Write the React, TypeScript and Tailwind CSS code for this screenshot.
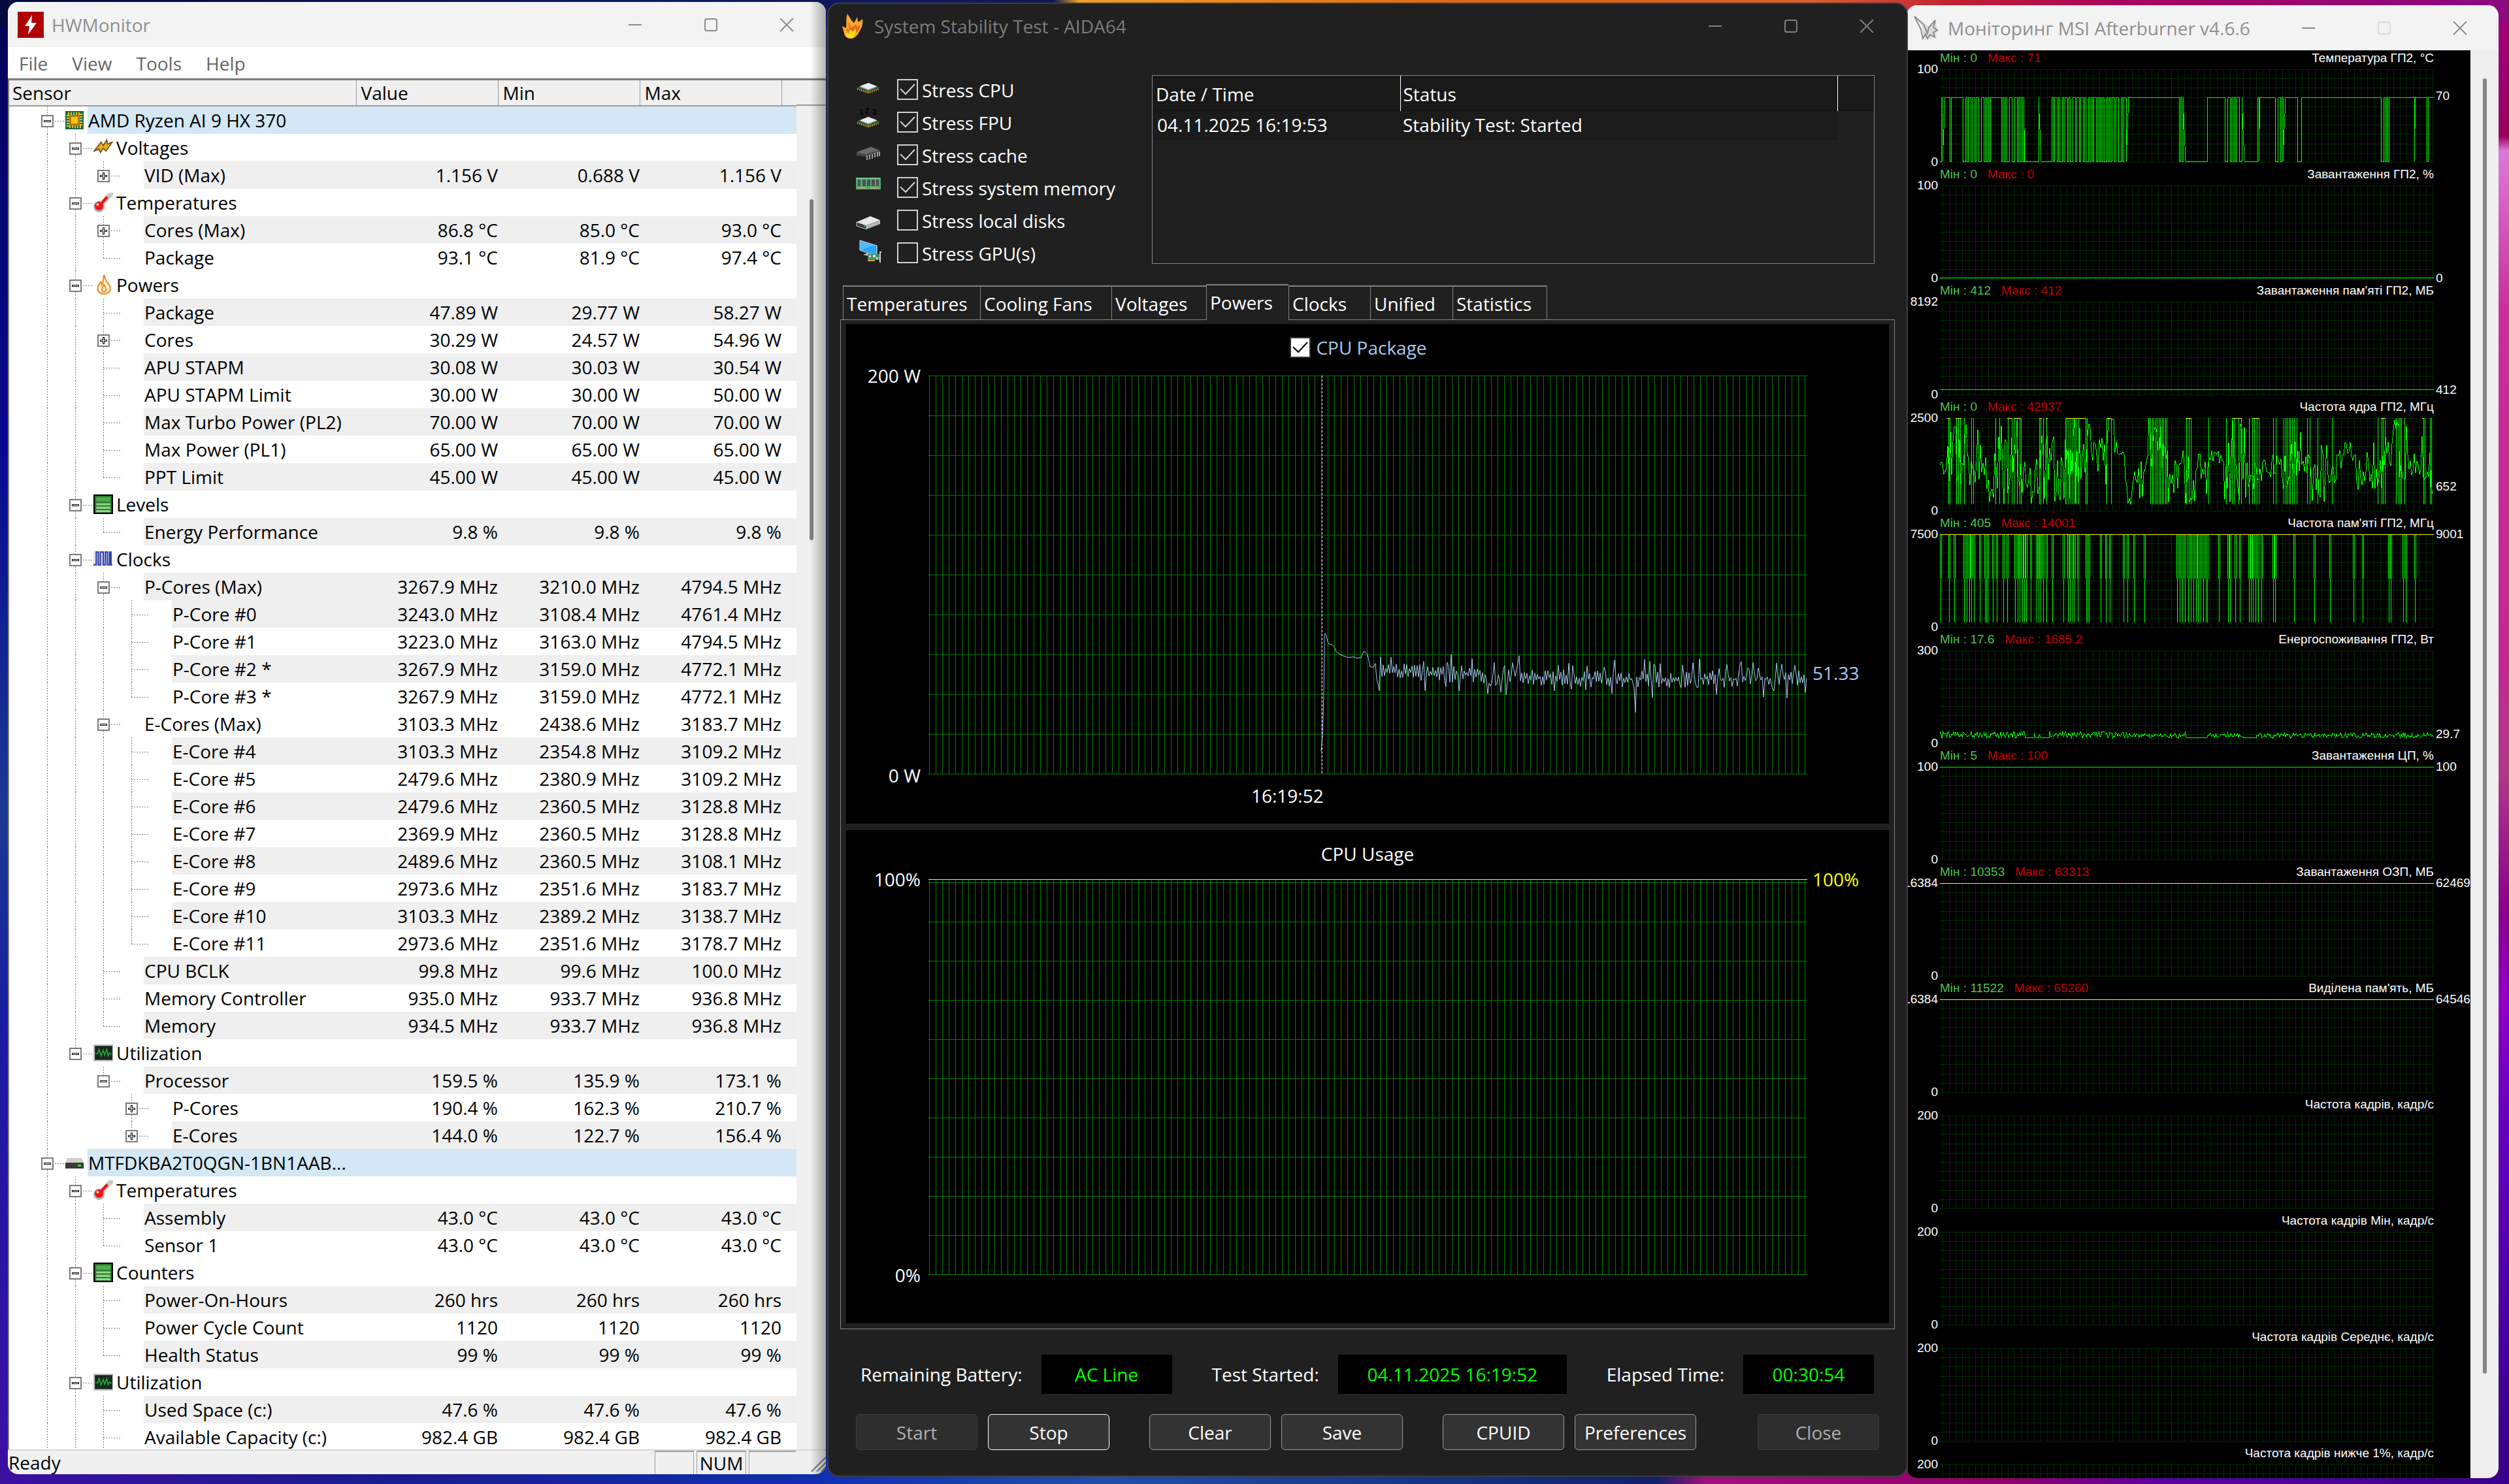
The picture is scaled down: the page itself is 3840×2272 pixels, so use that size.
import React from "react";

type Icon = "chip" | "bolt" | "thermometer" | "flame" | "levels" | "wave" | "graph" | "drive";

type Row = {
  level: number;
  name: string;
  mark?: "+" | "-";
  icon?: Icon;
  shaded?: boolean;
  values?: string[];
};

const group = (level: number, name: string, icon: Icon): Row => ({ level, name, icon, mark: "-" });

const row = (level: number, name: string, values: string, shaded = false, mark?: "+" | "-"): Row => ({
  level,
  name,
  mark,
  shaded,
  values: values.split("|"),
});

const rows: Row[] = [
  group(0, "AMD Ryzen AI 9 HX 370", "chip"),
  group(1, "Voltages", "bolt"),
  row(2, "VID (Max)", "1.156 V|0.688 V|1.156 V", true, "+"),
  group(1, "Temperatures", "thermometer"),
  row(2, "Cores (Max)", "86.8 °C|85.0 °C|93.0 °C", true, "+"),
  row(2, "Package", "93.1 °C|81.9 °C|97.4 °C"),
  group(1, "Powers", "flame"),
  row(2, "Package", "47.89 W|29.77 W|58.27 W", true),
  row(2, "Cores", "30.29 W|24.57 W|54.96 W", false, "+"),
  row(2, "APU STAPM", "30.08 W|30.03 W|30.54 W", true),
  row(2, "APU STAPM Limit", "30.00 W|30.00 W|50.00 W"),
  row(2, "Max Turbo Power (PL2)", "70.00 W|70.00 W|70.00 W", true),
  row(2, "Max Power (PL1)", "65.00 W|65.00 W|65.00 W"),
  row(2, "PPT Limit", "45.00 W|45.00 W|45.00 W", true),
  group(1, "Levels", "levels"),
  row(2, "Energy Performance", "9.8 %|9.8 %|9.8 %", true),
  group(1, "Clocks", "wave"),
  row(2, "P-Cores (Max)", "3267.9 MHz|3210.0 MHz|4794.5 MHz", true, "-"),
  row(3, "P-Core #0", "3243.0 MHz|3108.4 MHz|4761.4 MHz", true),
  row(3, "P-Core #1", "3223.0 MHz|3163.0 MHz|4794.5 MHz"),
  row(3, "P-Core #2 *", "3267.9 MHz|3159.0 MHz|4772.1 MHz", true),
  row(3, "P-Core #3 *", "3267.9 MHz|3159.0 MHz|4772.1 MHz"),
  row(2, "E-Cores (Max)", "3103.3 MHz|2438.6 MHz|3183.7 MHz", false, "-"),
  row(3, "E-Core #4", "3103.3 MHz|2354.8 MHz|3109.2 MHz", true),
  row(3, "E-Core #5", "2479.6 MHz|2380.9 MHz|3109.2 MHz"),
  row(3, "E-Core #6", "2479.6 MHz|2360.5 MHz|3128.8 MHz", true),
  row(3, "E-Core #7", "2369.9 MHz|2360.5 MHz|3128.8 MHz"),
  row(3, "E-Core #8", "2489.6 MHz|2360.5 MHz|3108.1 MHz", true),
  row(3, "E-Core #9", "2973.6 MHz|2351.6 MHz|3183.7 MHz"),
  row(3, "E-Core #10", "3103.3 MHz|2389.2 MHz|3138.7 MHz", true),
  row(3, "E-Core #11", "2973.6 MHz|2351.6 MHz|3178.7 MHz"),
  row(2, "CPU BCLK", "99.8 MHz|99.6 MHz|100.0 MHz", true),
  row(2, "Memory Controller", "935.0 MHz|933.7 MHz|936.8 MHz"),
  row(2, "Memory", "934.5 MHz|933.7 MHz|936.8 MHz", true),
  group(1, "Utilization", "graph"),
  row(2, "Processor", "159.5 %|135.9 %|173.1 %", true, "-"),
  row(3, "P-Cores", "190.4 %|162.3 %|210.7 %", false, "+"),
  row(3, "E-Cores", "144.0 %|122.7 %|156.4 %", true, "+"),
  group(0, "MTFDKBA2T0QGN-1BN1AAB...", "drive"),
  group(1, "Temperatures", "thermometer"),
  row(2, "Assembly", "43.0 °C|43.0 °C|43.0 °C", true),
  row(2, "Sensor 1", "43.0 °C|43.0 °C|43.0 °C"),
  group(1, "Counters", "levels"),
  row(2, "Power-On-Hours", "260 hrs|260 hrs|260 hrs", true),
  row(2, "Power Cycle Count", "1120|1120|1120"),
  row(2, "Health Status", "99 %|99 %|99 %", true),
  group(1, "Utilization", "graph"),
  row(2, "Used Space (c:)", "47.6 %|47.6 %|47.6 %", true),
  row(2, "Available Capacity (c:)", "982.4 GB|982.4 GB|982.4 GB"),
];

// small seeded generator so the charts look the same on every render
const seeded = (seed: number) => () => {
  seed = (seed * 1664525 + 1013904223) % 4294967296;
  return seed / 4294967296;
};

const range = (n: number) => Array.from({ length: n }, (_, i) => i);

const toPath = (points: number[][]) => "M" + points.map(([x, y]) => `${x.toFixed(1)} ${y.toFixed(1)}`).join("L");

/* ---------- window buttons ---------- */

const WindowButtons = ({ stroke, maxStroke = stroke }: { stroke: string; maxStroke?: string }) => (
  <div className="ml-auto flex items-center gap-[92px]">
    <button aria-label="Minimize" className="size-6">
      <svg viewBox="0 0 24 24" fill="none" stroke={stroke} strokeWidth="2">
        <path d="M2 12h20" />
      </svg>
    </button>
    <button aria-label="Maximize" className="size-6">
      <svg viewBox="0 0 24 24" fill="none" stroke={maxStroke} strokeWidth="2">
        <rect x="3" y="3" width="18" height="18" rx="3" />
      </svg>
    </button>
    <button aria-label="Close" className="size-6">
      <svg viewBox="0 0 24 24" fill="none" stroke={stroke} strokeWidth="2">
        <path d="M2 2l20 20M22 2L2 22" />
      </svg>
    </button>
  </div>
);

/* ---------- HWMonitor ---------- */

const TreeIcon = ({ icon }: { icon: Icon }) => (
  <svg viewBox="0 0 28 28" className={icon === "chip" || icon === "drive" ? "size-7" : "size-[30px]"}>
    {icon === "chip" && (
      <>
        <rect width="28" height="28" fill="#1d6b3c" />
        <rect x="4" y="4" width="20" height="20" fill="none" stroke="#f0c020" strokeWidth="4" strokeDasharray="2 2" />
        <rect x="6" y="6" width="16" height="16" fill="#b87a10" />
        <rect x="9" y="9" width="10" height="10" fill="#fbc510" />
      </>
    )}
    {icon === "bolt" && (
      <path d="M1 19L11 6l3 5 5-8 1 6 7-3-9 13-4-4-4 6-2-5z" fill="#e9ae22" stroke="#6b4d0c" strokeWidth="1.5" />
    )}
    {icon === "thermometer" && (
      <>
        <path d="M8 20L25 2" stroke="#c9c9c9" strokeWidth="7" strokeLinecap="round" />
        <circle cx="8" cy="20" r="8" fill="#b4b4b4" />
        <path d="M8 19L20 6" stroke="#f01414" strokeWidth="4" />
        <circle cx="8" cy="19" r="6" fill="#f01414" />
        <circle cx="6" cy="17" r="2" fill="#ffb0b0" />
      </>
    )}
    {icon === "flame" && (
      <>
        <path
          d="M15 0c3 5 1 7 5 11 3 3 4 5 4 9 0 4-4 7-9 7s-9-3-9-8c0-4 3-6 4-9 2 1 2 2 2 4 3-4 2-9 3-14z"
          fill="#fff3dc"
          stroke="#f28a1c"
          strokeWidth="2"
        />
        <path d="M15 14c2 3 3 4 3 7a3 3 0 0 1-6 0c0-3 2-4 3-7z" fill="#fff" stroke="#f28a1c" strokeWidth="2" />
      </>
    )}
    {icon === "levels" && (
      <>
        <rect width="28" height="28" fill="#000" />
        <rect x="2" y="2" width="24" height="24" fill="#2f7d2f" />
        <path d="M4 7h20" stroke="#4caf4c" strokeWidth="6" />
        <path d="M4 14h20M4 19h20M4 24h20" stroke="#8fd68f" strokeWidth="3" />
      </>
    )}
    {icon === "wave" && (
      <>
        <rect y="2" width="27" height="22" fill="#e4e4ea" />
        <path d="M0 22h4V4h3v18h3V4h4v18h3V4h3v18h3V4h2v18h2" fill="none" stroke="#2e40a4" strokeWidth="2" />
      </>
    )}
    {icon === "graph" && (
      <>
        <rect y="2" width="28" height="24" fill="#c0c0c0" />
        <rect x="2" y="4" width="25" height="20" fill="#1c2620" />
        <path d="M3 15h3l2-6 3 9 3-8 2 7 3-8 2 9 2-4 3 2" fill="none" stroke="#1fae38" strokeWidth="1.5" />
      </>
    )}
    {icon === "drive" && (
      <>
        <path d="M3 7h22l3 7H0z" fill="#d0d0d0" />
        <rect y="14" width="28" height="9" fill="#3a3a3a" />
        <rect x="19" y="17" width="5" height="3" fill="#2be03a" />
      </>
    )}
  </svg>
);

// does the branch at `level` go on below row `index`?
const branchGoesOn = (index: number, level: number) => {
  for (let i = index + 1; i < rows.length; i++) {
    if (rows[i].level === level) return true;
    if (rows[i].level < level) return false;
  }
  return true;
};

const TreeGuide = ({ index }: { index: number }) => {
  const { level, mark } = rows[index];
  const width = 86 + 43 * level;
  const cx = 58 + 43 * level;
  return (
    <svg width={width} height="42" className="shrink-0" shapeRendering="crispEdges" fill="none">
      <g stroke="#808080" strokeDasharray="2 2">
        {range(level).map((l) => branchGoesOn(index, l) && <path key={l} d={`M${58.5 + 43 * l} 0v42`} />)}
        <path d={`M${cx + 0.5} 0v${branchGoesOn(index, level) ? 42 : 22}`} />
        <path d={`M${cx} 22.5h${width - cx - 1}`} />
      </g>
      {mark && (
        <>
          <rect x={cx - 8} y="14" width="17" height="17" fill="#fff" stroke="#7a7a7a" strokeWidth="2" />
          <path d={`M${cx - 5} 22.5h11`} stroke="#000" strokeWidth="3" />
          {mark === "+" && <path d={`M${cx + 0.5} 17v11`} stroke="#000" strokeWidth="3" />}
          <path d={`M${cx - 4} 22.5h9`} stroke="#fff" />
          {mark === "+" && <path d={`M${cx + 0.5} 18v9`} stroke="#fff" />}
        </>
      )}
    </svg>
  );
};

const HWMonitor = () => (
  <section className="relative mt-[3px] mb-[15px] flex min-w-0 flex-[1252] flex-col overflow-hidden rounded-2xl bg-[#f0f0f0] text-black">
    <header className="flex h-[69px] shrink-0 items-center gap-3 bg-[#f3f3f3] pr-12 pl-[15px]">
      <svg viewBox="0 0 40 40" className="size-10">
        <rect width="40" height="40" fill="#b00000" />
        <path d="M22 5L11 22h7l-2 13 13-18h-8z" fill="#fff" />
      </svg>
      <h1 className="text-[28px] leading-10 text-[#8f8f8f]">HWMonitor</h1>
      <WindowButtons stroke="#8a8a8a" />
    </header>

    <nav className="flex h-12 shrink-0 items-center gap-[37px] border-b-2 border-[#f0f0f0] bg-white pt-1 pl-[17px] text-[28px] text-[#666]">
      <button>File</button>
      <button>View</button>
      <button>Tools</button>
      <button>Help</button>
    </nav>

    <div className="flex min-h-0 flex-1 overflow-hidden border-t-[3px] border-l-2 border-[#7d7d7d] bg-white">
      <table className="h-fit w-full table-fixed border-collapse text-[28px] leading-[42px] whitespace-nowrap">
        <colgroup>
          <col />
          <col className="w-[217px]" />
          <col className="w-[217px]" />
          <col className="w-[217px]" />
          <col className="w-[23px]" />
        </colgroup>
        <thead>
          <tr className="h-[39px] bg-[#f0f0f0] text-left leading-[37px] [&>th]:border-r [&>th]:border-b-2 [&>th]:border-[#9a9a9a] [&>th]:pl-[7px] [&>th]:font-normal">
            <th className="pl-[5px]!">Sensor</th>
            <th>Value</th>
            <th>Min</th>
            <th>Max</th>
            <th className="border-r-0!"></th>
          </tr>
        </thead>
        <tbody>
          {rows.map((r, i) => {
            const fill = r.level === 0 ? "bg-[#d3e7f5]" : r.shaded ? "bg-[#efefef]" : "";
            return (
              <tr key={i} className="h-[42px]">
                <td className="p-0">
                  <div className="flex h-[42px]">
                    <TreeGuide index={i} />
                    <span className="flex w-[34px] shrink-0 items-center">{r.icon && <TreeIcon icon={r.icon} />}</span>
                    <span className={`flex-1 pl-px ${fill}`}>{r.name}</span>
                  </div>
                </td>
                {range(3).map((n) => (
                  <td key={n} className={`p-0 text-right ${fill}`}>
                    {r.values?.[n]}
                  </td>
                ))}
                <td className={fill}></td>
              </tr>
            );
          })}
        </tbody>
      </table>
      <div className="flex w-[45px] shrink-0 flex-col bg-[#f0f0f0]">
        <div className="h-[39px] border-b-2 border-[#9a9a9a]" />
        <div className="mt-[143px] ml-[20px] h-[522px] w-[6px] rounded-full bg-[#808080]" />
      </div>
    </div>

    <footer className="flex shrink-0 border-t-2 border-[#d8d8d8] pr-[46px] pl-px text-[28px] leading-9">
      <span className="mr-auto">Ready</span>
      <span className="mr-1 w-[60px] border-t-2 border-r border-l border-[#a0a0a0]" />
      <span className="mr-1 w-[76px] border-t-2 border-r border-l border-[#a0a0a0] text-center leading-[34px]">NUM</span>
      <span className="w-[72px] border-t-2 border-l border-[#a0a0a0]" />
    </footer>
    <svg viewBox="0 0 24 24" className="absolute right-0 bottom-1 size-6" stroke="#7a7a7a" strokeWidth="2">
      <path d="M2 24L24 2M10 24L24 10M17 24l7-7" />
    </svg>
    <div className="pointer-events-none absolute inset-y-0 right-0 w-6 bg-linear-to-r from-transparent to-black/30" />
  </section>
);

/* ---------- AIDA64 ---------- */

const ChipDrawing = () => (
  <>
    <path d="M1 16l18-7 18 7-18 8z" fill="#1e5a3c" />
    <path d="M2 18l17 6 17-6" fill="none" stroke="#d9a520" strokeWidth="2.5" strokeDasharray="1.5 1.5" />
    <path d="M5 15l14-6 14 6-14 6z" fill="#8b8b8b" />
    <path d="M6 14l13-5 13 5-13 5z" fill="#ececec" />
  </>
);

const stressTests = [
  {
    name: "Stress CPU",
    checked: true,
    art: <ChipDrawing />,
  },
  {
    name: "Stress FPU",
    checked: true,
    art: (
      <>
        <g transform="translate(0 2)">
          <ChipDrawing />
        </g>
        <g className="font-['Liberation_Sans'] text-[12px] font-bold">
          <text x="5" y="8">1</text>
          <text x="14" y="6">2</text>
          <text x="25" y="8">3</text>
        </g>
      </>
    ),
  },
  {
    name: "Stress cache",
    checked: true,
    art: (
      <>
        <path d="M1 15l22-8 13 5v3l-20 7-15-2z" fill="#484848" />
        <path d="M1 15l22-8 13 5-21 6z" fill="#6a6a6a" />
        <path d="M17 20v7M21 19v7M25 18v7M29 16v7M33 15v7M36 14v7" stroke="#c4c4d0" strokeWidth="1.5" />
      </>
    ),
  },
  {
    name: "Stress system memory",
    checked: true,
    art: (
      <>
        <rect y="4" width="38" height="18" fill="#4fa777" />
        <path d="M1 5h36" stroke="#8fd0a8" strokeWidth="2" strokeDasharray="2 1" />
        <path d="M3 7h4v10H3zM10 7h5v10h-5zM17 7h5v10h-5zM24 7h5v10h-5zM31 7h4v10h-4z" fill="#4e4e4e" />
        <path d="M3 19.500h13M22 19.500h13" stroke="#dc9a3c" strokeWidth="2" />
      </>
    ),
  },
  {
    name: "Stress local disks",
    checked: false,
    art: (
      <>
        <path d="M1 22l21-9 15 6-21 8z" fill="#e9e9e9" />
        <path d="M16 27l21-8v6l-21 8z" fill="#b5b5b8" />
        <path d="M1 22l15 5v6L1 28z" fill="#3a3a3a" stroke="#c8c8c8" />
        <rect x="12" y="27" width="2" height="2" fill="#28d040" />
      </>
    ),
  },
  {
    name: "Stress GPU(s)",
    checked: false,
    art: (
      <>
        <path d="M6 0l26 8v16L6 15z" fill="#2aa4f4" stroke="#d8e4ea" />
        <path d="M7 1l20 7-19 7z" fill="#52baff" />
        <path d="M11 22l8-3 1 5z" fill="#cdd3d8" />
        <rect x="18" y="21" width="18" height="9" fill="#3f8f63" />
        <path d="M20 23h3v3h-3zM26 22h4v4h-4zM31 26h3v3h-3z" fill="#d8d8d8" />
        <path d="M18 31h11" stroke="#dc9a3c" strokeWidth="2" />
        <path d="M39 18h-2v16" fill="none" stroke="#d0d0d0" strokeWidth="2" />
      </>
    ),
  },
];

const CheckBox = ({ checked, solid = false }: { checked: boolean; solid?: boolean }) => (
  <span className="grid">
    <input
      type="checkbox"
      defaultChecked={checked}
      className={`peer col-start-1 row-start-1 size-8 appearance-none border-2 ${
        solid ? "border-[#333] bg-white" : "border-[#d2d2d2]"
      }`}
    />
    <svg
      viewBox="0 0 32 32"
      className={`pointer-events-none invisible col-start-1 row-start-1 size-8 peer-checked:visible ${
        solid ? "stroke-black" : "stroke-[#d2d2d2]"
      }`}
      fill="none"
      strokeWidth="2"
    >
      <path d="M5 15l8 8L27 8" />
    </svg>
  </span>
);

const powerTrace = () => {
  const rand = seeded(7);
  const points = [
    [602, 576], [604, 554], [605, 521], [606, 484], [607, 426], [607, 396], [609, 396], [613, 411], [618, 412], [623, 417],
    [625, 423], [632, 428], [643, 432], [652, 431], [657, 433], [663, 432], [667, 423], [670, 424], [673, 427], [677, 446],
    [682, 447],
  ];
  let sign = 1;
  for (let x = 685; x <= 1345; x += 2) {
    const mean = 453 + Math.min(12, (x - 685) / 28);
    const spike = rand();
    sign = -sign;
    let y = mean + sign * rand() * 13;
    if (spike > 0.89) y = mean - 14 - rand() * 18;
    if (spike < 0.08) y = mean + 12 + rand() * 18;
    if (x === 1083) y = 516;
    points.push([x, y]);
  }
  return toPath(points);
};

const PlotGrid = ({ top, step, height }: { top: number; step: number; height: number }) => (
  <g stroke="#008000" shapeRendering="crispEdges">
    {range(135).map((i) => (
      <path key={i} d={`M${2.5 + i * 10} 0V${height}`} />
    ))}
    {range(11).map((i) => (
      <path key={`h${i}`} d={`M0 ${top + i * step}H1346`} />
    ))}
  </g>
);

const AxisLabels = ({ top, bottom }: { top: string; bottom: string }) => (
  <div className="-my-5 flex w-[125px] shrink-0 flex-col justify-between pr-[11px] text-right leading-10">
    <span>{top}</span>
    <span>{bottom}</span>
  </div>
);

const tabs = [
  ["Temperatures", "w-[210px]"],
  ["Cooling Fans", "w-[201px]"],
  ["Voltages", "w-[145px]"],
  ["Powers", "w-[126px]"],
  ["Clocks", "w-[125px]"],
  ["Unified", "w-[126px]"],
  ["Statistics", "w-[145px]"],
];

const Aida = () => (
  <section className="z-10 mt-[6px] mb-[13px] flex min-w-0 flex-[1650] flex-col rounded-2xl bg-[#202020] text-[28px] text-white shadow-[0_0_0_2px_#3c3c44]">
    <header className="flex h-[66px] shrink-0 items-center gap-[17px] pt-px pr-[49px] pl-[21px]">
      <svg viewBox="0 0 32 38" className="h-[38px] w-8">
        <path d="M8 0c5 8 7 12 10 14l5-9c0 4 1 6 2 8l6-5c1 9-1 13-4 18-3 6-7 12-14 12S3 33 3 30L0 19l6 3c1-8-1-14 2-22z" fill="#f9a72b" />
        <path d="M9 12l5 10 7-6 2 4 5-3c-2 9-7 14-13 14-5 0-8-4-9-8l5 1z" fill="#f2641c" />
        <path d="M11 24l5 3 5-4c0 8-2 15-8 15-4 0-7-4-8-9l5 2z" fill="#fddc1e" />
      </svg>
      <h1 className="leading-10 text-[#7c7c7c]">System Stability Test - AIDA64</h1>
      <WindowButtons stroke="#808080" />
    </header>

    <div className="flex pt-10 pr-[49px] pl-[42px]">
      <div className="w-[453px] shrink-0">
        {stressTests.map((t) => (
          <label key={t.name} className="flex h-[50px] items-center">
            <svg viewBox="0 0 38 38" className="mr-[25px] size-[38px] overflow-visible">
              {t.art}
            </svg>
            <CheckBox checked={t.checked} />
            <span className="ml-[6px] pt-[2px] leading-10">{t.name}</span>
          </label>
        ))}
      </div>
      <div className="mt-[3px] h-[289px] flex-1 border border-[#83838c]">
        <table className="w-full border-collapse text-left">
          <colgroup>
            <col className="w-[379px]" />
            <col />
            <col className="w-[56px]" />
          </colgroup>
          <thead>
            <tr className="h-[53px] border-b border-[#101010] bg-[#191919]">
              <th className="border-r border-white pt-1 pl-[5px] font-normal">Date / Time</th>
              <th className="border-r border-white pt-1 pl-1 font-normal">Status</th>
              <th></th>
            </tr>
          </thead>
          <tbody>
            <tr className="h-11 leading-10">
              <td className="border-b border-[#141414] bg-[#1b1b1b] pl-[7px]">04.11.2025 16:19:53</td>
              <td className="border-b border-[#141414] bg-[#1b1b1b] pl-1">Stability Test: Started</td>
              <td></td>
            </tr>
          </tbody>
        </table>
      </div>
    </div>

    <div className="mt-[23px] flex items-end pl-[22px]">
      {tabs.map(([name, width]) => (
        <button
          key={name}
          className={`border-t-2 border-l border-[#83838c] pl-[5px] text-left last:border-r ${width} ${
            name === "Powers" ? "relative -mb-px h-[55px] bg-[#202020] pb-[2px]" : "h-[52px] pt-[2px]"
          }`}
        >
          {name}
        </button>
      ))}
    </div>

    <div className="mx-[18px] flex min-h-0 flex-1 flex-col gap-[10px] border border-[#83838c] px-2 pt-[6px] pb-2">
      <div className="flex min-h-0 flex-[764] flex-col bg-black">
        <div className="flex h-[79px] shrink-0 justify-center pt-4 pr-7">
          <label className="flex h-10 items-center gap-2 text-[#a6caf0]">
            <CheckBox checked solid />
            CPU Package
          </label>
        </div>
        <div className="flex min-h-0 flex-1">
          <AxisLabels top="200 W" bottom="0 W" />
          <svg viewBox="0 0 1346 612" preserveAspectRatio="none" className="min-w-0 flex-1" fill="none">
            <PlotGrid top={0.5} step={61} height={611} />
            <path d="M603.500 0V611" stroke="#fff" strokeDasharray="3 3" shapeRendering="crispEdges" />
            <path d={powerTrace()} stroke="#a6caf0" />
          </svg>
          <div className="relative w-[125px] shrink-0">
            <span
              className="absolute left-2 -translate-y-1/2 leading-10 text-[#a6caf0]"
              style={{ top: `${(1 - 51.33 / 200) * 100}%` }}
            >
              51.33
            </span>
          </div>
        </div>
        <div className="h-[74px] shrink-0 px-[125px] pt-[11px]">
          <div className="w-[45%] text-right leading-10">16:19:52</div>
        </div>
      </div>

      <div className="flex min-h-0 flex-[755] flex-col bg-black">
        <div className="h-[75px] shrink-0 pt-4 text-center leading-10">CPU Usage</div>
        <div className="flex min-h-0 flex-1">
          <AxisLabels top="100%" bottom="0%" />
          <svg viewBox="0 0 1346 606" preserveAspectRatio="none" className="min-w-0 flex-1" fill="none">
            <PlotGrid top={5.5} step={60} height={606} />
            <path d="M1 .5H1346" stroke="#ff0" shapeRendering="crispEdges" />
          </svg>
          <span className="-mt-5 w-[125px] shrink-0 pl-2 leading-10 text-[#ff0]">100%</span>
        </div>
        <div className="h-[74px] shrink-0" />
      </div>
    </div>

    <div className="mt-[39px] flex justify-between pr-[50px] pl-[49px] leading-[60px]">
      <div className="flex gap-[29px]">
        Remaining Battery:
        <output className="w-[200px] bg-black text-center text-[#0f0]">AC Line</output>
      </div>
      <div className="flex gap-[29px]">
        Test Started:
        <output className="w-[350px] bg-black text-center text-[#0f0]">04.11.2025 16:19:52</output>
      </div>
      <div className="flex gap-[29px]">
        Elapsed Time:
        <output className="w-[200px] bg-black text-center text-[#0f0]">00:30:54</output>
      </div>
    </div>

    <div className="mt-[31px] mb-[39px] flex gap-[61px] px-[42px] [&_button]:h-[55px] [&_button]:w-[186px] [&_button]:rounded-md [&_button]:border [&_button]:border-[#9b9b9b] [&_button]:bg-[#333] [&_button:disabled]:border-[#3c3c3c] [&_button:disabled]:bg-[#2e2e2e] [&_button:disabled]:text-[#b0b0b0]">
      <div className="flex gap-4">
        <button disabled>Start</button>
        <button className="border-white!">Stop</button>
      </div>
      <div className="flex gap-4">
        <button>Clear</button>
        <button>Save</button>
      </div>
      <div className="flex gap-4">
        <button>CPUID</button>
        <button>Preferences</button>
      </div>
      <button disabled className="ml-auto">
        Close
      </button>
    </div>
  </section>
);

/* ---------- MSI Afterburner ---------- */

const W = 756;
const H = 142;

// [end x, top y, bottom y]: equal numbers hold the line, others make it jump between the two
type Zone = [number, number, number];

const zonesToPath = (zones: Zone[], seed: number, step: number, smooth = false) => {
  const rand = seeded(seed);
  const points: number[][] = [];
  let x = 0;
  let up = true;
  zones.forEach(([end, top, bottom]) => {
    if (top === bottom) {
      points.push([x, top], [end, top]);
      x = end;
      return;
    }
    while (x < end) {
      up = !up;
      const y = smooth ? top + rand() * (bottom - top) : up ? top : bottom;
      if (!smooth && points.length) points.push([x, points[points.length - 1][1]]);
      points.push([x, y]);
      x += smooth ? step : step * (rand() > 0.6 ? 2 : 1);
    }
  });
  return toPath(points);
};

const T = 43;
const temperature = zonesToPath(
  [
    [5, T, H - 1], [11, T, T], [18, T, H - 1], [35, T, T], [78, T, H - 1], [94, T, T], [130, T, H - 1], [144, H - 1, H - 1],
    [146, T, H - 1], [151, H - 1, H - 1], [154, T, H - 1], [167, H - 1, H - 1], [287, T, H - 1], [364, T, T], [376, T, H - 1],
    [409, H - 1, H - 1], [436, T, T], [464, T, H - 1], [484, H - 1, H - 1], [490, T, H - 1], [511, T, T], [527, T, H - 1],
    [547, T, T], [553, H - 1, H - 1], [671, T, T], [689, T, H - 1], [726, T, T], [728, T, H - 1], [741, T, T],
    [750, T, H - 1], [W, T, T],
  ],
  3,
  2,
);

// core clock: slow noise mixed with jumps over the full scale
const coreNoise = zonesToPath(
  [
    [12, 55, 125], [38, 0, 110], [66, 5, 135], [84, 60, 141], [104, 10, 138], [122, 0, 120], [150, 60, 135], [190, 20, 138],
    [232, 0, 130], [252, 20, 90], [258, 0, 136], [268, 0, 3], [272, 5, 141], [284, 52, 60], [320, 55, 135], [350, 0, 80],
    [372, 55, 132], [410, 50, 138], [436, 50, 75], [468, 0, 130], [484, 60, 132], [524, 50, 100], [560, 20, 110],
    [600, 40, 130], [616, 50, 110], [632, 35, 60], [664, 50, 110], [690, 0, 110], [720, 0, 95], [738, 55, 90], [W, 0, 140],
  ],
  21,
  2,
  true,
);
const coreJumps = [
  13, 15, 25, 28, 31, 37, 48, 51, 85, 91, 104, 110, 113, 118, 122, 124, 152, 154, 158, 163, 192, 194, 197, 200, 203, 206, 208,
  212, 223, 225, 255, 262, 322, 325, 327, 330, 332, 335, 337, 340, 342, 345, 347, 377, 381, 384, 411, 438, 447, 450, 457, 461,
  473, 478, 481, 485, 488, 510, 514, 526, 529, 531, 534, 536, 539, 542, 546, 562, 566, 578, 600, 670, 676, 678, 681, 698, 702,
  704, 706, 711, 740, 742, 750, 752,
];
const coreClamp = [
  [11, 16], [24, 33], [103, 111], [114, 124], [152, 156], [162, 165], [193, 223], [255, 262], [376, 385], [448, 462],
  [478, 489], [675, 681], [738, 741],
];

const memoryDrops = [
  1, 14, 22, 37, 41, 45, 48, 52, 61, 69, 71, 73, 81, 87, 97, 103, 115, 119, 122, 126, 129, 132, 139, 148, 151, 154, 158, 163, 172,
  189, 196, 199, 203, 206, 211, 224, 226, 228, 246, 254, 260, 281, 287, 297, 313, 363, 367, 371, 375, 380, 384, 388, 392, 395, 399,
  403, 407, 409, 427, 441, 444, 452, 459, 473, 476, 479, 483, 487, 492, 510, 513, 542, 573, 597, 633, 647, 687, 690, 709, 713, 727,
];

const gpuPower = zonesToPath(
  [
    [130, 124, 134], [144, 133, 133], [146, 124, 134], [151, 133, 133], [154, 124, 134], [167, 133, 133], [287, 124, 134],
    [364, 127, 134], [376, 124, 134], [409, 133, 133], [464, 126, 134], [484, 133, 133], [W, 126, 134],
  ],
  9,
  1.5,
  true,
);

const Line = ({ d, yellow = false }: { d: string; yellow?: boolean }) => (
  <path d={d} stroke={yellow ? "#ff0" : "#0f0"} shapeRendering="crispEdges" />
);

type Chart = {
  title: string;
  min?: string;
  max?: string;
  top: string;
  value?: string;
  at?: number;
  art?: React.ReactNode;
};

const charts: Chart[] = [
  { title: "Температура ГП2, °C", min: "0", max: "71", top: "100", value: "70", at: 0.71, art: <Line d={temperature} /> },
  { title: "Завантаження ГП2, %", min: "0", max: "0", top: "100", value: "0", at: 0, art: <Line d={`M0 141.500H${W}`} /> },
  { title: "Завантаження пам'яті ГП2, МБ", min: "412", max: "412", top: "8192", value: "412", at: 0.05, art: <Line d={`M0 134.500H${W}`} /> },
  {
    title: "Частота ядра ГП2, МГц",
    min: "0",
    max: "42937",
    top: "2500",
    value: "652",
    at: 0.26,
    art: (
      <>
        <Line d={coreNoise} />
        <Line d={coreJumps.map((x) => `M${x + 0.5} 0V132`).join("")} />
        <Line yellow d={coreClamp.map(([a, b]) => `M${a} .5H${b}`).join("")} />
      </>
    ),
  },
  {
    title: "Частота пам'яті ГП2, МГц",
    min: "405",
    max: "14001",
    top: "7500",
    value: "9001",
    at: 1,
    art: (
      <>
        <Line d={memoryDrops.map((x) => `M${x - 0.5} 0V68M${x + 1.5} 0V68M${x + 0.5} 68V135`).join("")} />
        <Line yellow d={`M0 .5H${W}`} />
      </>
    ),
  },
  { title: "Енергоспоживання ГП2, Вт", min: "17.6", max: "1685.2", top: "300", value: "29.7", at: 0.1, art: <Line d={gpuPower} /> },
  { title: "Завантаження ЦП, %", min: "5", max: "100", top: "100", value: "100", at: 1, art: <Line d={`M0 .5H${W}`} /> },
  { title: "Завантаження ОЗП, МБ", min: "10353", max: "63313", top: "16384", value: "62469", at: 1, art: <Line yellow d={`M0 .5H${W}`} /> },
  { title: "Виділена пам'ять, МБ", min: "11522", max: "65260", top: "16384", value: "64546", at: 1, art: <Line yellow d={`M0 .5H${W}`} /> },
  { title: "Частота кадрів, кадр/с", top: "200" },
  { title: "Частота кадрів Мін, кадр/с", top: "200" },
  { title: "Частота кадрів Середнє, кадр/с", top: "200" },
  { title: "Частота кадрів нижче 1%, кадр/с", top: "200" },
];

const ChartBlock = ({ title, min, max, top, value, at = 0, art }: Chart) => (
  <div className="h-[178px] shrink-0">
    <div className="flex h-[29px] pr-[56px] pl-[49px] leading-6">
      {min && <span className="mr-4 text-[#4cc24c]">Мін : {min}</span>}
      {max && <span className="text-[#c00000]">Макс : {max}</span>}
      <span className="ml-auto">{title}</span>
    </div>
    <div className="flex h-[142px]">
      <div className="-my-[11px] flex w-[49px] shrink-0 flex-col items-end justify-between pr-[3px] leading-[22px]">
        <span>{top}</span>
        <span>0</span>
      </div>
      <svg viewBox={`0 0 ${W} ${H}`} preserveAspectRatio="none" className="min-w-0 flex-1 overflow-visible" fill="none">
        <g stroke="#002a00" shapeRendering="crispEdges">
          {range(76).map((i) => (
            <path key={i} d={`M${4.5 + i * 10} 0V${H}`} />
          ))}
          {range(11).map((i) => (
            <path key={`h${i}`} d={`M0 ${Math.round(i * 14.2) + 0.5}H${W}`} />
          ))}
        </g>
        {art}
      </svg>
      <div className="relative w-[56px] shrink-0">
        <span className="absolute left-[3px] -translate-y-1/2 leading-[22px]" style={{ top: `${(1 - at) * 100}%` }}>
          {value}
        </span>
      </div>
    </div>
  </div>
);

const Afterburner = () => (
  <section className="mt-2 mb-[9px] flex min-w-0 flex-[906] flex-col overflow-hidden rounded-2xl bg-[#efefef]">
    <header className="flex h-[69px] shrink-0 items-center gap-3 bg-[#f3f3f3] pr-[47px] pl-[11px]">
      <svg viewBox="0 0 40 40" className="size-10">
        <path d="M0 1l17 13 8 4 9-11 1 12 3 5-4 3 1 9-5-5-5 8-2-7-5 6-4-10-1-11z" fill="#dcdcdc" />
        <path d="M1 2l14 12 6 14 2-9 10-11-3 11 6 4-6 4 2 7-7-4-4 6-3-7-4 7-3-14z" fill="none" stroke="#8c8c8c" strokeWidth="2" />
      </svg>
      <h1 className="text-[28px] leading-10 whitespace-nowrap text-[#8f8f8f]">Моніторинг MSI Afterburner v4.6.6</h1>
      <WindowButtons stroke="#8a8a8a" maxStroke="#dcdcdc" />
    </header>
    <div className="flex min-h-0 flex-1">
      <div className="flex min-w-0 flex-1 flex-col overflow-hidden border-l-2 border-[#2c2c2c] bg-black font-['Liberation_Sans',sans-serif] text-[19px] whitespace-nowrap text-white">
        {charts.map((c) => (
          <ChartBlock key={c.title} {...c} />
        ))}
      </div>
      <div className="flex w-[43px] flex-col items-center pt-[43px] pb-40">
        <div className="w-[6px] flex-1 rounded-full bg-[#868686]" />
      </div>
    </div>
  </section>
);

const Wallpaper = () => (
  <div className="absolute inset-0 -z-10">
    <div className="absolute inset-x-0 top-0 h-10 bg-[linear-gradient(90deg,#04083e,#0a1a66_25%,#101850_42%,#f0a020_43%,#e06010_60%,#e0602a_72%,#c02030_78%,#a80060_85%,#8a0a80)]" />
    <div className="absolute inset-x-0 bottom-0 h-12 bg-[linear-gradient(90deg,#3a10a0,#1a1a90_15%,#1030b0_33%,#1f4fa8_44%,#10206a_66%,#a0107a_68%,#90006a_80%,#5a00a0_86%,#3a008a)]" />
    <div className="absolute inset-y-10 left-0 w-10 bg-[linear-gradient(180deg,#04045a,#0a0a90_30%,#1a3a90_55%,#1a1aa0_70%,#3a10a0)]" />
    <div className="absolute inset-y-8 right-0 w-12 bg-[linear-gradient(180deg,#a0007a,#980060_8%,#dc7ad8_9%,#c8309a_20%,#c02a90_45%,#b03a8a_52%,#86008c_62%,#9000c8_68%,#6400c0_76%,#38008a)]" />
    <div className="absolute inset-y-10 left-[1200px] w-24 bg-[#1c2850]" />
  </div>
);

export default function App() {
  return (
    <main className="relative isolate flex h-screen min-h-[1200px] overflow-hidden pr-4 pl-3 font-['Open_Sans','Noto_Sans',sans-serif]">
      <Wallpaper />
      <HWMonitor />
      <div className="w-1 shrink-0" />
      <Aida />
      <Afterburner />
    </main>
  );
}
